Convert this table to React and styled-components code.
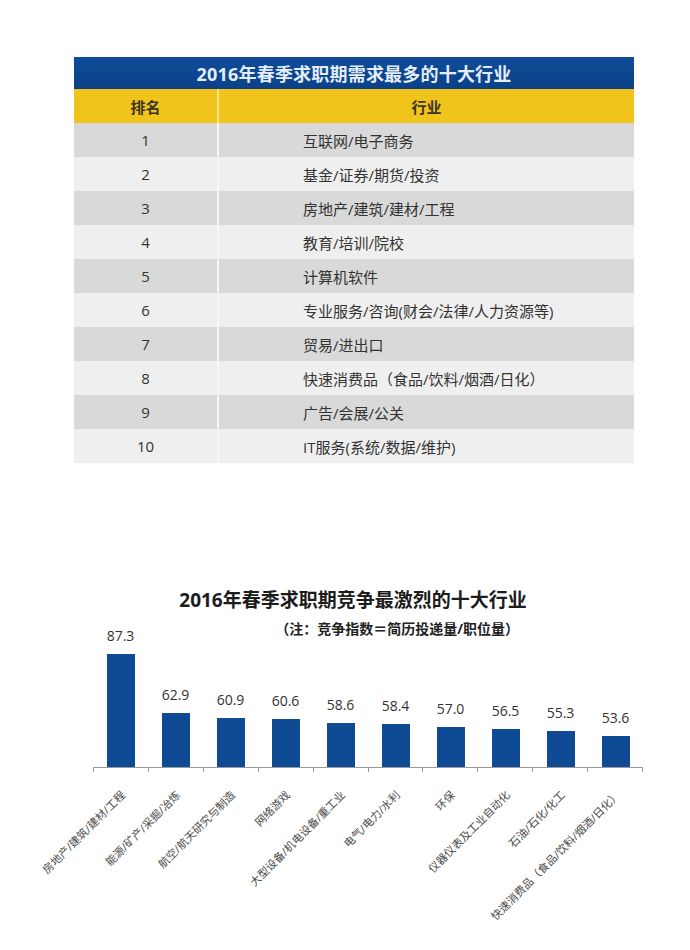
import React from "react";
import styled, { createGlobalStyle } from "styled-components";

const GlobalStyle = createGlobalStyle`
  body {
    margin: 0;
    background: #ffffff;
    font-family: "Open Sans", "Noto Sans CJK SC", sans-serif;
  }
`;

const Page = styled.div`
  width: 690px;
  height: 950px;
  overflow: hidden;
  background: #ffffff;
`;

const TableWrap = styled.div`
  width: 560px;
  margin: 57px 0 0 74px;
`;

const Table = styled.table`
  width: 100%;
  border-collapse: separate;
  border-spacing: 0;
`;

const TitleCell = styled.th`
  height: 32px;
  padding: 0;
  background: linear-gradient(#0f4c98, #0a4189);
  color: #e4edf7;
  font-size: 18px;
  font-weight: 700;
  text-align: center;
  letter-spacing: 0.2px;
`;

const HeadCell = styled.th`
  height: 34px;
  padding: 0;
  background: #f1c41b;
  color: #3a3526;
  font-size: 15px;
  font-weight: 700;
  text-align: center;
  width: ${(p) => (p.$rank ? "143px" : "auto")};
  border-right: ${(p) => (p.$rank ? "2px solid #f7e08a" : "none")};
`;

const Cell = styled.td`
  height: 34px;
  padding: 0 0 0 ${(p) => (p.$rank ? "0" : "84px")};
  background: ${(p) => (p.$odd ? "#d9d9d9" : "#efefef")};
  color: #333333;
  font-size: 15px;
  text-align: ${(p) => (p.$rank ? "center" : "left")};
  border-right: ${(p) => (p.$rank ? "2px solid #f6f6f6" : "none")};
  white-space: nowrap;
`;

const Chart = styled.div`
  width: 550px;
  margin: 123px 0 0 93px;
`;

const ChartTitle = styled.div`
  padding-right: 30px;
  text-align: center;
  font-size: 19px;
  line-height: 28px;
  font-weight: 700;
  color: #1c1c1c;
`;

const ChartNote = styled.div`
  margin-top: 7px;
  padding-right: 124px;
  text-align: right;
  font-size: 14px;
  line-height: 16px;
  font-weight: 700;
  color: #222222;
`;

const Plot = styled.div`
  display: flex;
  height: 139px;
  margin-top: -9px;
  border-bottom: 1px solid #9a9a9a;
`;

const Column = styled.div`
  width: 55px;
  display: flex;
  flex-direction: column;
  justify-content: flex-end;
  align-items: center;
`;

const Value = styled.div`
  font-size: 14px;
  line-height: 16px;
  color: #333333;
  margin-bottom: 10px;
`;

const Bar = styled.div`
  width: 28px;
  background: #0f4a94;
`;

const Ticks = styled.div`
  display: flex;
  height: 4px;
  border-right: 1px solid #9a9a9a;
`;

const Tick = styled.div`
  width: 55px;
  border-left: 1px solid #9a9a9a;
  box-sizing: border-box;
`;

const Labels = styled.div`
  display: flex;
  margin-top: 14px;
`;

const LabelCell = styled.div`
  width: 55px;
  flex: none;
  display: flex;
  justify-content: flex-end;
  padding-right: 25px;
  box-sizing: border-box;
`;

const Label = styled.div`
  flex: none;
  white-space: nowrap;
  font-size: 11px;
  line-height: 14px;
  color: #4a4a4a;
  transform-origin: 100% 50%;
  transform: rotate(-45deg);
`;

const industries = [
  "互联网/电子商务",
  "基金/证券/期货/投资",
  "房地产/建筑/建材/工程",
  "教育/培训/院校",
  "计算机软件",
  "专业服务/咨询(财会/法律/人力资源等)",
  "贸易/进出口",
  "快速消费品（食品/饮料/烟酒/日化）",
  "广告/会展/公关",
  "IT服务(系统/数据/维护)",
];

const competition = [
  ["房地产/建筑/建材/工程", 87.3],
  ["能源/矿产/采掘/冶炼", 62.9],
  ["航空/航天研究与制造", 60.9],
  ["网络游戏", 60.6],
  ["大型设备/机电设备/重工业", 58.6],
  ["电气/电力/水利", 58.4],
  ["环保", 57.0],
  ["仪器仪表及工业自动化", 56.5],
  ["石油/石化/化工", 55.3],
  ["快速消费品（食品/饮料/烟酒/日化）", 53.6],
];

// axis doesn't start at zero in the original chart
const barHeight = (v) => Math.round((v - 40.6) * 2.42);

const App = () => {
  return (
    <Page>
      <GlobalStyle />
      <TableWrap>
        <Table>
          <thead>
            <tr>
              <TitleCell colSpan={2}>2016年春季求职期需求最多的十大行业</TitleCell>
            </tr>
            <tr>
              <HeadCell $rank>排名</HeadCell>
              <HeadCell>行业</HeadCell>
            </tr>
          </thead>
          <tbody>
            {industries.map((name, i) => (
              <tr key={name}>
                <Cell $rank $odd={i % 2 === 0}>
                  {i + 1}
                </Cell>
                <Cell $odd={i % 2 === 0}>{name}</Cell>
              </tr>
            ))}
          </tbody>
        </Table>
      </TableWrap>

      <Chart>
        <ChartTitle>2016年春季求职期竞争最激烈的十大行业</ChartTitle>
        <ChartNote>（注：竞争指数＝简历投递量/职位量）</ChartNote>
        <Plot>
          {competition.map(([name, v]) => (
            <Column key={name}>
              <Value>{v.toFixed(1)}</Value>
              <Bar style={{ height: barHeight(v) }} />
            </Column>
          ))}
        </Plot>
        <Ticks>
          {competition.map(([name]) => (
            <Tick key={name} />
          ))}
        </Ticks>
        <Labels>
          {competition.map(([name]) => (
            <LabelCell key={name}>
              <Label>{name}</Label>
            </LabelCell>
          ))}
        </Labels>
      </Chart>
    </Page>
  );
};

export default App;
